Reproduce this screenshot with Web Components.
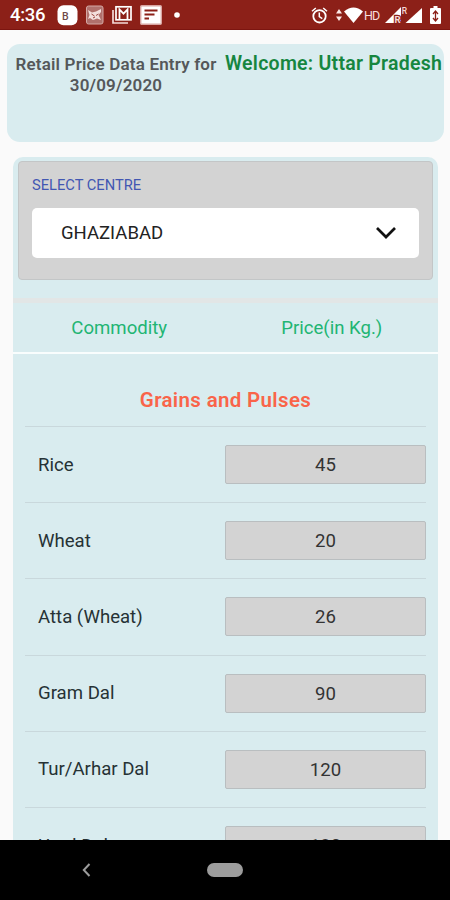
<!DOCTYPE html>
<html lang="en">
<head>
<meta charset="utf-8">
<meta name="viewport" content="width=device-width, initial-scale=1">
<title>Retail Price Data Entry</title>
<style>
    body {
        margin: 0;
        background: #fafafa;
        font-family: Roboto, 'Liberation Sans', sans-serif;
        --panel: #d9ecef;
        --field: #d3d3d3;
    }
</style>
</head>
<body>
<price-app></price-app>

<script>
/**
 * all icons, each one with its size and its svg content
 */
const icons = {
    badge: [21, 21, `<rect x='.5' y='.3' width='20' height='20' rx='6' fill='#fff'/>
        <text x='5' y='15' font-size='10.500' font-weight='500' fill='#6e4a48'>B</text>`],
    photo: [18, 20, `<rect x='.5' y='1' width='16.5' height='18' rx='2' fill='#b0706c' stroke='#d5a8a4'/>
        <path d='M2 5l4 2.500 4-1 5-2.500v3l-2.500 3 2.500 5-4-1.500-4 1.500-3-2-2 1 1.500-4z' fill='#f3dfdd'/>
        <path d='M5.500 9l3 2M10 10.500l2.500-1.500M7 13l2-1' stroke='#9c4540'/>`],
    mail: [20, 18, `<path d='M1 4v13h15' fill='none' stroke='#f3dad8' stroke-width='1.7'/>
        <rect x='4' y='.8' width='15' height='13' fill='none' stroke='#fff' stroke-width='1.7'/>
        <path d='M7.500 13V3.500l4 4.200 4-4.200V13' fill='none' stroke='#fff' stroke-width='1.8'/>`],
    note: [22, 20, `<rect x='.7' y='.7' width='20.6' height='18.6' rx='1' fill='#fff' stroke='#d9a5a2' stroke-width='1.4'/>
        <path d='M4.5 5.5h13M4.5 9.5h10M4.5 13.5h4.5' stroke='#8c2018' stroke-width='1.8'/>`],
    dot: [6, 6, `<circle cx='3' cy='3' r='2.8' fill='#fff'/>`],
    alarm: [17, 17, `<circle cx='8.5' cy='9.3' r='6.2' fill='none' stroke='#fff' stroke-width='1.8'/>
        <path d='M1 4.3L4.8 1M16 4.3L12.2 1M8.3 5.6v4l3 2' fill='none' stroke='#fff' stroke-width='1.5'/>`],
    arrows: [6, 14, `<path d='M3 1l3 4.500H0zM3 13L0 8.500h6z' fill='#fbe9e7'/>`],
    wifi: [19, 16, `<path d='M0 4.500Q9.500-3.500 19 4.500L9.500 16z' fill='#fff'/>`],
    signalr: [16, 16, `<path d='M16 0v16H0z' fill='#fff'/>
        <text x='9.500' y='16' font-size='9.500' font-weight='700' fill='#f5d8d6' stroke='#8c2018' stroke-width='2.400' paint-order='stroke'>R</text>`],
    signal: [22, 18, `<path d='M21 2v15H4.500z' fill='#fff'/>
        <text x='.8' y='7.500' font-size='8.500' font-weight='500' fill='#f5d8d6'>R</text>`],
    battery: [11, 18, `<path d='M3.500 0h4v2H10q1 0 1 1v14q0 1-1 1H1q-1 0-1-1V3q0-1 1-1h2.500z' fill='#fff'/>
        <path d='M5.500 5v10M3 8l2.500-3L8 8M3 12l2.500 3L8 12' fill='none' stroke='#8c2018' stroke-width='1.3'/>`],
    chevron: [22, 14, `<path d='M2 2l9 9 9-9' fill='none' stroke='#111' stroke-width='2.700'/>`],
    back: [9, 14, `<path d='M7.500 1L1.800 7l5.700 6' fill='none' stroke='#9c9c9c' stroke-width='2'/>`]
}

class AppIcon extends HTMLElement {
    connectedCallback() {
        const [w, h, content] = icons[this.getAttribute('name')]
        this.attachShadow({ mode: 'open' }).innerHTML = `
            <style>
                :host { display: block; flex: none; }
                svg { display: block; overflow: visible; }
            </style>
            <svg width='${w}' height='${h}' viewBox='0 0 ${w} ${h}'>${content}</svg>`
    }
}

class StatusBar extends HTMLElement {
    connectedCallback() {
        this.attachShadow({ mode: 'open' }).innerHTML = `
            <style>
                :host {
                    display: flex;
                    align-items: center;
                    justify-content: space-between;
                    box-sizing: border-box;
                    height: 30px;
                    padding: 1px 9px 0 10px;
                    background: #8c2018;
                    border-bottom: 1px solid #7c1510;
                    color: #fff;
                }
                div { display: flex; align-items: center; }
                .time { width: 47px; font-size: 18.500px; font-weight: 500; letter-spacing: -.3px; }
                .left { gap: 8px; }
                .left .time { margin-right: -8px; }
                .dot { margin-left: 4px; }
                .hd { width: 16px; margin: 0 5px 0 1px; font-size: 12.500px; letter-spacing: -.8px; color: #f8dedc; }
                .alarm { margin-right: 8px; }
                .wifi { margin-left: 2px; }
                .battery { margin-left: 7px; }
            </style>
            <div class='left'>
                <span class='time'>${this.getAttribute('time')}</span>
                <app-icon name='badge'></app-icon>
                <app-icon name='photo'></app-icon>
                <app-icon name='mail'></app-icon>
                <app-icon name='note'></app-icon>
                <app-icon class='dot' name='dot'></app-icon>
            </div>
            <div>
                <app-icon class='alarm' name='alarm'></app-icon>
                <app-icon name='arrows'></app-icon>
                <app-icon class='wifi' name='wifi'></app-icon>
                <span class='hd'>HD</span>
                <app-icon name='signalr'></app-icon>
                <app-icon name='signal'></app-icon>
                <app-icon class='battery' name='battery'></app-icon>
            </div>`
    }
}

/**
 * the card on top with the title and the name of the user
 */
class PageHeader extends HTMLElement {
    connectedCallback() {
        this.attachShadow({ mode: 'open' }).innerHTML = `
            <style>
                :host {
                    display: grid;
                    grid-template-columns: 218px 1fr;
                    box-sizing: border-box;
                    height: 98px;
                    margin: 14px 6px 0 7px;
                    padding-top: 10px;
                    border-radius: 13px;
                    background: var(--panel);
                    white-space: nowrap;
                }
                .title {
                    text-align: center;
                    font-size: 17px;
                    font-weight: 600;
                    letter-spacing: .17px;
                    line-height: 21px;
                    color: #55585a;
                }
                .user {
                    font-size: 19.500px;
                    font-weight: 600;
                    letter-spacing: .26px;
                    line-height: 20px;
                    color: #16863f;
                }
            </style>
            <div class='title'><slot name='title'></slot><br><slot name='date'></slot></div>
            <div class='user'><slot name='user'></slot></div>`
    }
}

class CentreSelect extends HTMLElement {
    connectedCallback() {
        this.attachShadow({ mode: 'open' }).innerHTML = `
            <style>
                :host {
                    display: block;
                    box-sizing: border-box;
                    height: 119px;
                    margin: 0 5px;
                    padding: 13px 13px 0;
                    border: 1px solid #c3c6c7;
                    border-radius: 4px;
                    background: var(--field);
                }
                label {
                    display: block;
                    height: 32.500px;
                    font-size: 14.700px;
                    line-height: 20px;
                    color: #4257b2;
                }
                .select {
                    display: flex;
                    align-items: center;
                    justify-content: space-between;
                    box-sizing: border-box;
                    height: 50px;
                    padding: 0 22px 0 29px;
                    border-radius: 5px;
                    background: #fff;
                    font-size: 18.500px;
                    color: #222;
                }
            </style>
            <label>${this.getAttribute('label')}</label>
            <div class='select'>
                <slot></slot>
                <app-icon name='chevron'></app-icon>
            </div>`
    }
}

class TableHead extends HTMLElement {
    connectedCallback() {
        this.attachShadow({ mode: 'open' }).innerHTML = `
            <style>
                :host {
                    display: grid;
                    grid-template-columns: 1fr 1fr;
                    align-items: center;
                    box-sizing: border-box;
                    height: 56px;
                    margin-top: 18px;
                    border-top: 5px solid #e2e6e6;
                    border-bottom: 2px solid #f9fdfd;
                    text-align: center;
                    font-size: 18.600px;
                    color: #22b573;
                }
            </style>
            <slot></slot>`
    }
}

class CommodityGroup extends HTMLElement {
    connectedCallback() {
        this.attachShadow({ mode: 'open' }).innerHTML = `
            <style>
                :host { display: block; padding: 34px 12px 0; }
                h2 {
                    height: 38px;
                    margin: 0;
                    text-align: center;
                    font-size: 20.500px;
                    font-weight: 600;
                    letter-spacing: .34px;
                    line-height: 24px;
                    color: #f96449;
                }
            </style>
            <h2>${this.getAttribute('heading')}</h2>
            <slot></slot>`
    }
}

class CommodityRow extends HTMLElement {
    connectedCallback() {
        this.attachShadow({ mode: 'open' }).innerHTML = `
            <style>
                :host {
                    display: grid;
                    grid-template-columns: 1fr 201px;
                    align-items: center;
                    box-sizing: border-box;
                    height: 76.200px;
                    padding-left: 13px;
                    border-top: 1px solid #c9d8dc;
                    font-size: 18.600px;
                    color: #263235;
                }
                .price {
                    box-sizing: border-box;
                    height: 39px;
                    border: 1px solid #b9bec0;
                    border-radius: 2px;
                    background: var(--field);
                    text-align: center;
                    line-height: 38px;
                    color: #333;
                }
            </style>
            <span><slot></slot></span>
            <div class='price'>${this.getAttribute('price')}</div>`
    }
}

class NavBar extends HTMLElement {
    connectedCallback() {
        this.attachShadow({ mode: 'open' }).innerHTML = `
            <style>
                :host {
                    display: grid;
                    grid-template-columns: 1fr 36px 1fr;
                    align-items: center;
                    height: 60px;
                    background: #000;
                }
                app-icon { margin-left: 82px; }
                .home { height: 14px; border-radius: 7px; background: #9c9c9c; }
            </style>
            <app-icon name='back'></app-icon>
            <div class='home'></div>`
    }
}

/**
 * the whole screen
 */
class PriceApp extends HTMLElement {
    connectedCallback() {
        this.attachShadow({ mode: 'open' }).innerHTML = `
            <style>
                :host { display: flex; flex-direction: column; height: 900px; overflow: hidden; }
                main { flex: 1; min-height: 0; overflow: hidden; display: flow-root; }
                .panel {
                    margin: 15px 12px 0 13px;
                    padding-top: 4px;
                    border-radius: 10px 10px 0 0;
                    background: var(--panel);
                }
            </style>
            <status-bar time='4:36'></status-bar>
            <main>
                <page-header>
                    <span slot='title'>Retail Price Data Entry for</span>
                    <span slot='date'>30/09/2020</span>
                    <span slot='user'>Welcome: Uttar Pradesh</span>
                </page-header>
                <div class='panel'>
                    <centre-select label='SELECT CENTRE'>GHAZIABAD</centre-select>
                    <table-head>
                        <span>Commodity</span>
                        <span>Price(in Kg.)</span>
                    </table-head>
                    <commodity-group heading='Grains and Pulses'>
                        <commodity-row price='45'>Rice</commodity-row>
                        <commodity-row price='20'>Wheat</commodity-row>
                        <commodity-row price='26'>Atta (Wheat)</commodity-row>
                        <commodity-row price='90'>Gram Dal</commodity-row>
                        <commodity-row price='120'>Tur/Arhar Dal</commodity-row>
                        <commodity-row price='130'>Urad Dal</commodity-row>
                    </commodity-group>
                </div>
            </main>
            <nav-bar></nav-bar>`
    }
}

window.customElements.define('app-icon', AppIcon)
window.customElements.define('status-bar', StatusBar)
window.customElements.define('page-header', PageHeader)
window.customElements.define('centre-select', CentreSelect)
window.customElements.define('table-head', TableHead)
window.customElements.define('commodity-group', CommodityGroup)
window.customElements.define('commodity-row', CommodityRow)
window.customElements.define('nav-bar', NavBar)
window.customElements.define('price-app', PriceApp)
</script>
</body>
</html>
